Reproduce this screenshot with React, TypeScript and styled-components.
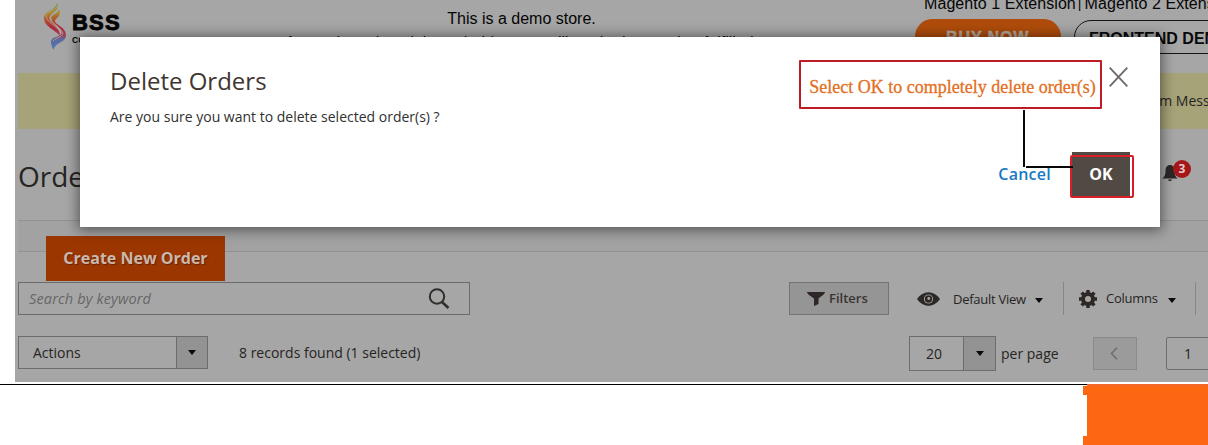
import React from 'react';
import styled, { createGlobalStyle } from 'styled-components';

const GlobalStyle = createGlobalStyle`
  * { box-sizing: border-box; }
  html, body { margin: 0; padding: 0; overflow: hidden; background: #fff; }
  svg { display: block; flex: none; }
`;

const Page = styled.div`
  position: relative;
  width: 1208px;
  height: 445px;
  overflow: hidden;
  background: #fff;
  color: #262422;
  font-family: 'Open Sans', 'Noto Sans', sans-serif;
  font-size: 14px;
  white-space: nowrap;
`;

const Admin = styled.main`
  margin-left: 15px;
  height: 382px;
  overflow: hidden;
  background: #a6a6a6;
`;

const Header = styled.header`
  display: flex;
  height: 73px;
  color: #050505;
  font-family: 'Liberation Sans', Arial, sans-serif;
  font-size: 16px;
`;

const Brand = styled.div`
  display: flex;
  width: 180px;
  padding: 3px 0 0 28px;
`;

const BrandText = styled.div`
  margin-left: 5px;
`;

const BrandName = styled.div`
  height: 20px;
  margin-top: 10px;
  font-size: 22px;
  font-weight: 700;
  line-height: 20px;
  letter-spacing: 1.2px;
  -webkit-text-stroke: 0.9px #050505;
`;

const BrandSub = styled.div`
  margin-top: 2px;
  font-size: 8.5px;
  font-weight: 700;
  letter-spacing: 0.2px;
  line-height: 10px;
`;

const Notice = styled.div`
  width: 653px;
  padding-top: 9px;
  line-height: 20px;
  text-align: center;
`;

const NoticeLine = styled.div`
  height: 24px;
`;

const Promo = styled.div`
  flex: 1;
  min-width: 0;
  padding-left: 67px;
`;

const PromoTitle = styled.div`
  display: flex;
  height: 19px;
  margin-left: 9px;
  margin-top: -6px;
  line-height: 20px;
  letter-spacing: 0.08px;
`;

const Divider = styled.span`
  margin: 0 3px 0 2px;
  font-size: 14px;
  line-height: 19px;
`;

const PromoButtons = styled.div`
  display: flex;
  gap: 13px;
  margin-top: 6px;
`;

const Pill = styled.div<{ $outlined?: boolean }>`
  flex: none;
  width: ${(p) => (p.$outlined ? 190 : 146)}px;
  height: ${(p) => (p.$outlined ? 34 : 35)}px;
  margin-top: ${(p) => (p.$outlined ? 1 : 0)}px;
  padding-left: ${(p) => (p.$outlined ? 14 : 31)}px;
  border: ${(p) => (p.$outlined ? '1px solid #151515' : '0')};
  border-radius: 18px;
  background: ${(p) => (p.$outlined ? 'transparent' : '#b04c0b')};
  color: ${(p) => (p.$outlined ? '#080808' : '#b8a89c')};
  font-weight: 700;
  letter-spacing: ${(p) => (p.$outlined ? '0' : '0.9px')};
  line-height: ${(p) => (p.$outlined ? 35 : 38)}px;
  -webkit-text-stroke: ${(p) => (p.$outlined ? '0' : '0.5px #b8a89c')};
`;

const MessageBar = styled.div`
  height: 56px;
  margin-left: 3px;
  padding-left: 1107px;
  background: #a6a378;
  line-height: 56px;
`;

const TitleRow = styled.div`
  display: flex;
  justify-content: space-between;
  height: 91px;
  padding: 24px 16px 0 3px;
`;

const PageTitle = styled.h1`
  margin: 0;
  font-size: 28px;
  font-weight: 400;
  line-height: 46px;
`;

const Alerts = styled.div`
  position: relative;
  width: 30px;
  margin-top: 11px;
`;

const AlertCount = styled.span`
  position: absolute;
  top: -4px;
  left: 11px;
  width: 18px;
  height: 18px;
  border-radius: 9px;
  background: #a5171b;
  color: #e6c9c9;
  font-size: 12px;
  font-weight: 700;
  line-height: 18px;
  text-align: center;
`;

const ActionStrip = styled.div`
  height: 32px;
  margin-left: 3px;
  padding: 15px 0 0 28px;
  border-top: 1px solid #929292;
  border-bottom: 1px solid #929292;
  background: #a2a2a2;
`;

const CreateButton = styled.div`
  position: relative;
  width: 179px;
  height: 45px;
  background: #9c3600;
  color: #cbb8ad;
  font-size: 16px;
  font-weight: 700;
  line-height: 44px;
  text-align: center;
  text-shadow: 1px 1px 1px rgba(0, 0, 0, 0.35);
`;

const Toolbar = styled.div`
  display: flex;
  align-items: center;
  height: 33px;
  margin: 30px 0 0 3px;
`;

const Search = styled.div`
  display: flex;
  align-items: center;
  justify-content: space-between;
  width: 452px;
  height: 33px;
  padding: 0 19px 0 10px;
  border: 1px solid #6b6b6b;
  color: #666;
  font-size: 14.5px;
  font-style: italic;
  letter-spacing: 0.15px;
`;

const FilterButton = styled.div`
  display: flex;
  align-items: center;
  width: 100px;
  height: 33px;
  margin-left: 319px;
  padding-left: 17px;
  border: 1px solid #747474;
  background: #959595;
  color: #383431;
  font-size: 13px;
  font-weight: 600;
  line-height: 16px;
  gap: 4px;

  span { margin-bottom: 1px; }
`;

const ViewMenu = styled.div<{ $width: number; $offset: number; $gap: number; $text: number; $lift?: number }>`
  display: flex;
  align-items: center;
  width: ${(p) => p.$width}px;
  height: 33px;
  padding-left: ${(p) => p.$offset}px;
  border-right: 1px solid #868686;
  font-size: 13px;

  svg + span {
    width: ${(p) => p.$text}px;
    margin-left: ${(p) => p.$gap}px;
    margin-bottom: ${(p) => p.$lift ?? 0}px;
    letter-spacing: -0.27px;
  }
  span + svg { margin: 3px 0 0 9px; }
`;

const GridControls = styled.div`
  display: flex;
  align-items: center;
  height: 35px;
  margin: 21px 0 0 3px;
  line-height: 20px;
`;

const Select = styled.div<{ $width: number; $height: number; $arrow: number; $pad: number }>`
  display: flex;
  align-items: center;
  justify-content: space-between;
  flex: none;
  width: ${(p) => p.$width}px;
  height: ${(p) => p.$height}px;
  margin-top: ${(p) => p.$height - 35}px;
  padding-left: ${(p) => p.$pad}px;
  border: 1px solid #6d6d6d;

  > div {
    display: flex;
    align-items: center;
    justify-content: center;
    width: ${(p) => p.$arrow}px;
    height: 100%;
    border-left: 1px solid #6d6d6d;
    background: #939393;
  }
`;

const Records = styled.div`
  flex: none;
  width: 701px;
  margin-top: -2px;
  padding-left: 31px;
`;

const PerPage = styled.div`
  flex: none;
  width: 97px;
  padding-left: 5px;
`;

const PrevButton = styled.div`
  display: flex;
  align-items: center;
  justify-content: center;
  flex: none;
  width: 44px;
  height: 33px;
  padding-right: 3px;
  border: 1px solid #8a8a8a;
  background: #9b9b9b;
`;

const PageInput = styled.div`
  flex: none;
  width: 60px;
  height: 33px;
  margin-left: 29px;
  padding-left: 17px;
  border: 1px solid #6d6d6d;
  border-radius: 2px;
  line-height: 32px;
`;

const Footer = styled.footer`
  display: flex;
  justify-content: flex-end;
  height: 61px;
  margin-top: 2px;
  border-top: 1px solid #000;
`;

const FooterNotches = styled.div`
  display: flex;
  flex-direction: column;
  justify-content: space-between;
  padding-top: 1px;

  span { width: 4px; height: 9px; background: #fd6712; }
`;

const FooterBlock = styled.div`
  width: 121px;
  margin-top: -1px;
  background: #fd6712;
  border-top: 2px solid #f36829;
`;

const Modal = styled.section`
  position: absolute;
  top: 37px;
  left: 80px;
  width: 1080px;
  height: 190px;
  padding: 23px 26px 0 30px;
  background: #fff;
  box-shadow: 0 1px 12px 2px rgba(0, 0, 0, 0.48);
`;

const ModalTop = styled.div`
  display: flex;
  justify-content: space-between;
  height: 92px;
`;

const ModalTitle = styled.h2`
  margin: 0;
  color: #41362f;
  font-size: 24px;
  font-weight: 400;
  line-height: 42px;
`;

const Question = styled.p`
  margin: 4px 0 0;
  color: #303030;
  line-height: 22px;
`;

const ModalAside = styled.div`
  display: flex;
  align-items: flex-start;
  gap: 7px;
  padding-right: 6px;
`;

const Hint = styled.div`
  width: 303px;
  height: 49px;
  padding-left: 4px;
  border: 2px solid #bd1c24;
  border-radius: 1px;
  color: #e46f24;
  font-family: 'Liberation Serif', 'Times New Roman', serif;
  font-size: 18px;
  line-height: 50px;
  text-align: center;
  -webkit-text-stroke: 0.3px #e46f24;
`;

const CloseIcon = styled.svg`
  margin-top: 7px;
`;

const ModalActions = styled.div`
  display: flex;
  justify-content: flex-end;
  gap: 21px;
`;

const CancelButton = styled.div`
  color: #1979c3;
  font-size: 16px;
  font-weight: 600;
  letter-spacing: 0.25px;
  line-height: 44px;
`;

const OkButton = styled.div`
  position: relative;
  width: 58px;
  height: 44px;
  margin-right: 4px;
  background: #514943;
  color: #fff;
  font-size: 16px;
  font-weight: 700;
  line-height: 44px;
  text-align: center;
`;

const OkHighlight = styled.div`
  position: absolute;
  top: 3px;
  left: -2px;
  width: 64px;
  height: 43px;
  border: 2px solid #d81f27;
  border-radius: 2px;
`;

const Connector = styled.svg`
  position: absolute;
  top: 73px;
  left: 942px;
`;

const Caret = () => (
  <svg width="8" height="5" viewBox="0 0 8 5"><path d="M0 0h8L4 5z" fill="#090909" /></svg>
);

const FlameLogo = () => (
  <svg width="24" height="48" viewBox="0 0 24 48" fill="none">
    <defs>
      <linearGradient id="flame" x1="12" y1="0" x2="12" y2="48" gradientUnits="userSpaceOnUse">
        <stop offset="0" stopColor="#77852f" />
        <stop offset="0.2" stopColor="#a98a2c" />
        <stop offset="0.36" stopColor="#b2502b" />
        <stop offset="0.5" stopColor="#ad2a36" />
        <stop offset="0.66" stopColor="#a03a50" />
        <stop offset="0.76" stopColor="#5c6c9f" />
        <stop offset="1" stopColor="#4678b0" />
      </linearGradient>
    </defs>
    <path d="M14 0C17 9 7 9 6.500 15 6 20 18 24 17 33 13 27 1 24 1 15 1 7 13 8 14 0z" fill="url(#flame)" />
    <path d="M16 6c3 8-4 9-4 12 0 4 11 6 11 14 0 8-11 7-12.500 15C6 38 8 35 13 34c6-2 7-4 4-8-3-4-10-6-9-11 1-4 7-4 8-9z" fill="url(#flame)" />
    <path d="M3 11c-1 9 13 12 15 20M8 15c0 6 9 8 12 15M4 11c4-4 9-4 10-8M10 38c3-4 9-3 10-8" stroke="#b9a7a3" strokeWidth="0.8" />
  </svg>
);

const BellIcon = () => (
  <svg width="16" height="19" viewBox="0 0 16 19" fill="#2b2928">
    <path d="M8 1c3 0 4.500 2.500 4.500 6 0 4 1 5.500 3 7.500H.5c2-2 3-3.500 3-7.500C3.500 3.500 5 1 8 1zM6 15.500h4C9.500 17.500 6.500 17.500 6 15.500z" />
  </svg>
);

const SearchIcon = () => (
  <svg width="22" height="21" viewBox="0 0 22 21" fill="none" stroke="#302d2b">
    <circle cx="9" cy="8.500" r="7.200" strokeWidth="2" />
    <path d="M14 14l6.500 6" strokeWidth="2.500" />
  </svg>
);

const FunnelIcon = () => (
  <svg width="18" height="14" viewBox="0 0 18 14"><path d="M0 0h18c-.3 2-2 3-6.500 6.500V12L7 14V6.500C2 3 .3 2 0 0z" fill="#2d2825" /></svg>
);

const EyeIcon = () => (
  <svg width="23" height="14" viewBox="0 0 23 14">
    <path d="M0 7C6-2 17-2 23 7c-6 9-17 9-23 0z" fill="#2d2825" />
    <circle cx="11.500" cy="7" r="4.600" fill="#a6a6a6" />
    <circle cx="11.500" cy="7" r="3.700" fill="#2d2825" />
    <circle cx="11.800" cy="6.500" r="1.400" fill="#a6a6a6" />
  </svg>
);

const GearIcon = () => (
  <svg width="18" height="18" viewBox="0 0 18 18" fill="none" stroke="#2d2825">
    <circle cx="9" cy="9" r="5" strokeWidth="4" />
    <path d="M9 0v3M9 15v3M0 9h3M15 9h3M2.600 2.600l2.200 2.200M13.200 13.200l2.200 2.200M2.600 15.400l2.200-2.200M13.200 4.800l2.200-2.200" strokeWidth="3.400" />
  </svg>
);

export default function App() {
  return (
    <Page>
      <GlobalStyle />
      <Admin>
        <Header>
          <Brand>
            <FlameLogo />
            <BrandText>
              <BrandName>BSS</BrandName>
              <BrandSub>COMMERCE</BrandSub>
            </BrandText>
          </Brand>
          <Notice>
            <NoticeLine>This is a demo store.</NoticeLine>
            <NoticeLine>Any orders placed through this store will not be honored or fulfilled.</NoticeLine>
          </Notice>
          <Promo>
            <PromoTitle>Magento 1 Extension<Divider>|</Divider>Magento 2 Extension</PromoTitle>
            <PromoButtons>
              <Pill>BUY NOW</Pill>
              <Pill $outlined>FRONTEND DEMO</Pill>
            </PromoButtons>
          </Promo>
        </Header>
        <MessageBar>System Messages</MessageBar>
        <TitleRow>
          <PageTitle>Orders</PageTitle>
          <Alerts><BellIcon /><AlertCount>3</AlertCount></Alerts>
        </TitleRow>
        <ActionStrip><CreateButton>Create New Order</CreateButton></ActionStrip>
        <Toolbar>
          <Search><span>Search by keyword</span><SearchIcon /></Search>
          <FilterButton><FunnelIcon /><span>Filters</span></FilterButton>
          <ViewMenu $width={175} $offset={28} $gap={13} $text={73}><EyeIcon /><span>Default View</span><Caret /></ViewMenu>
          <ViewMenu $width={132} $offset={15} $gap={9} $text={53} $lift={2}><GearIcon /><span>Columns</span><Caret /></ViewMenu>
        </Toolbar>
        <GridControls>
          <Select $width={190} $height={33} $arrow={31} $pad={14}><span>Actions</span><div><Caret /></div></Select>
          <Records>8 records found (1 selected)</Records>
          <Select $width={87} $height={35} $arrow={32} $pad={16}><span>20</span><div><Caret /></div></Select>
          <PerPage>per page</PerPage>
          <PrevButton>
            <svg width="8" height="13" viewBox="0 0 8 13" fill="none"><path d="M7 .7L1.500 6.500 7 12.300" stroke="#6d6d6d" strokeWidth="1.500" /></svg>
          </PrevButton>
          <PageInput>1</PageInput>
        </GridControls>
      </Admin>
      <Footer>
        <FooterNotches><span /><span /></FooterNotches>
        <FooterBlock />
      </Footer>
      <Modal>
        <ModalTop>
          <div>
            <ModalTitle>Delete Orders</ModalTitle>
            <Question>Are you sure you want to delete selected order(s) ?</Question>
          </div>
          <ModalAside>
            <Hint>Select OK to completely delete order(s)</Hint>
            <CloseIcon width="19" height="20" viewBox="0 0 19 20" fill="none"><path d="M.7.700l17.600 18.600M18.300.7L.7 19.300" stroke="#706b68" strokeWidth="1.900" /></CloseIcon>
          </ModalAside>
        </ModalTop>
        <ModalActions>
          <CancelButton>Cancel</CancelButton>
          <OkButton>OK<OkHighlight /></OkButton>
        </ModalActions>
        <Connector width="52" height="59" viewBox="0 0 52 59" fill="none">
          <path d="M2 0v57M4 57h47" stroke="#080808" strokeWidth="2" />
        </Connector>
      </Modal>
    </Page>
  );
}
